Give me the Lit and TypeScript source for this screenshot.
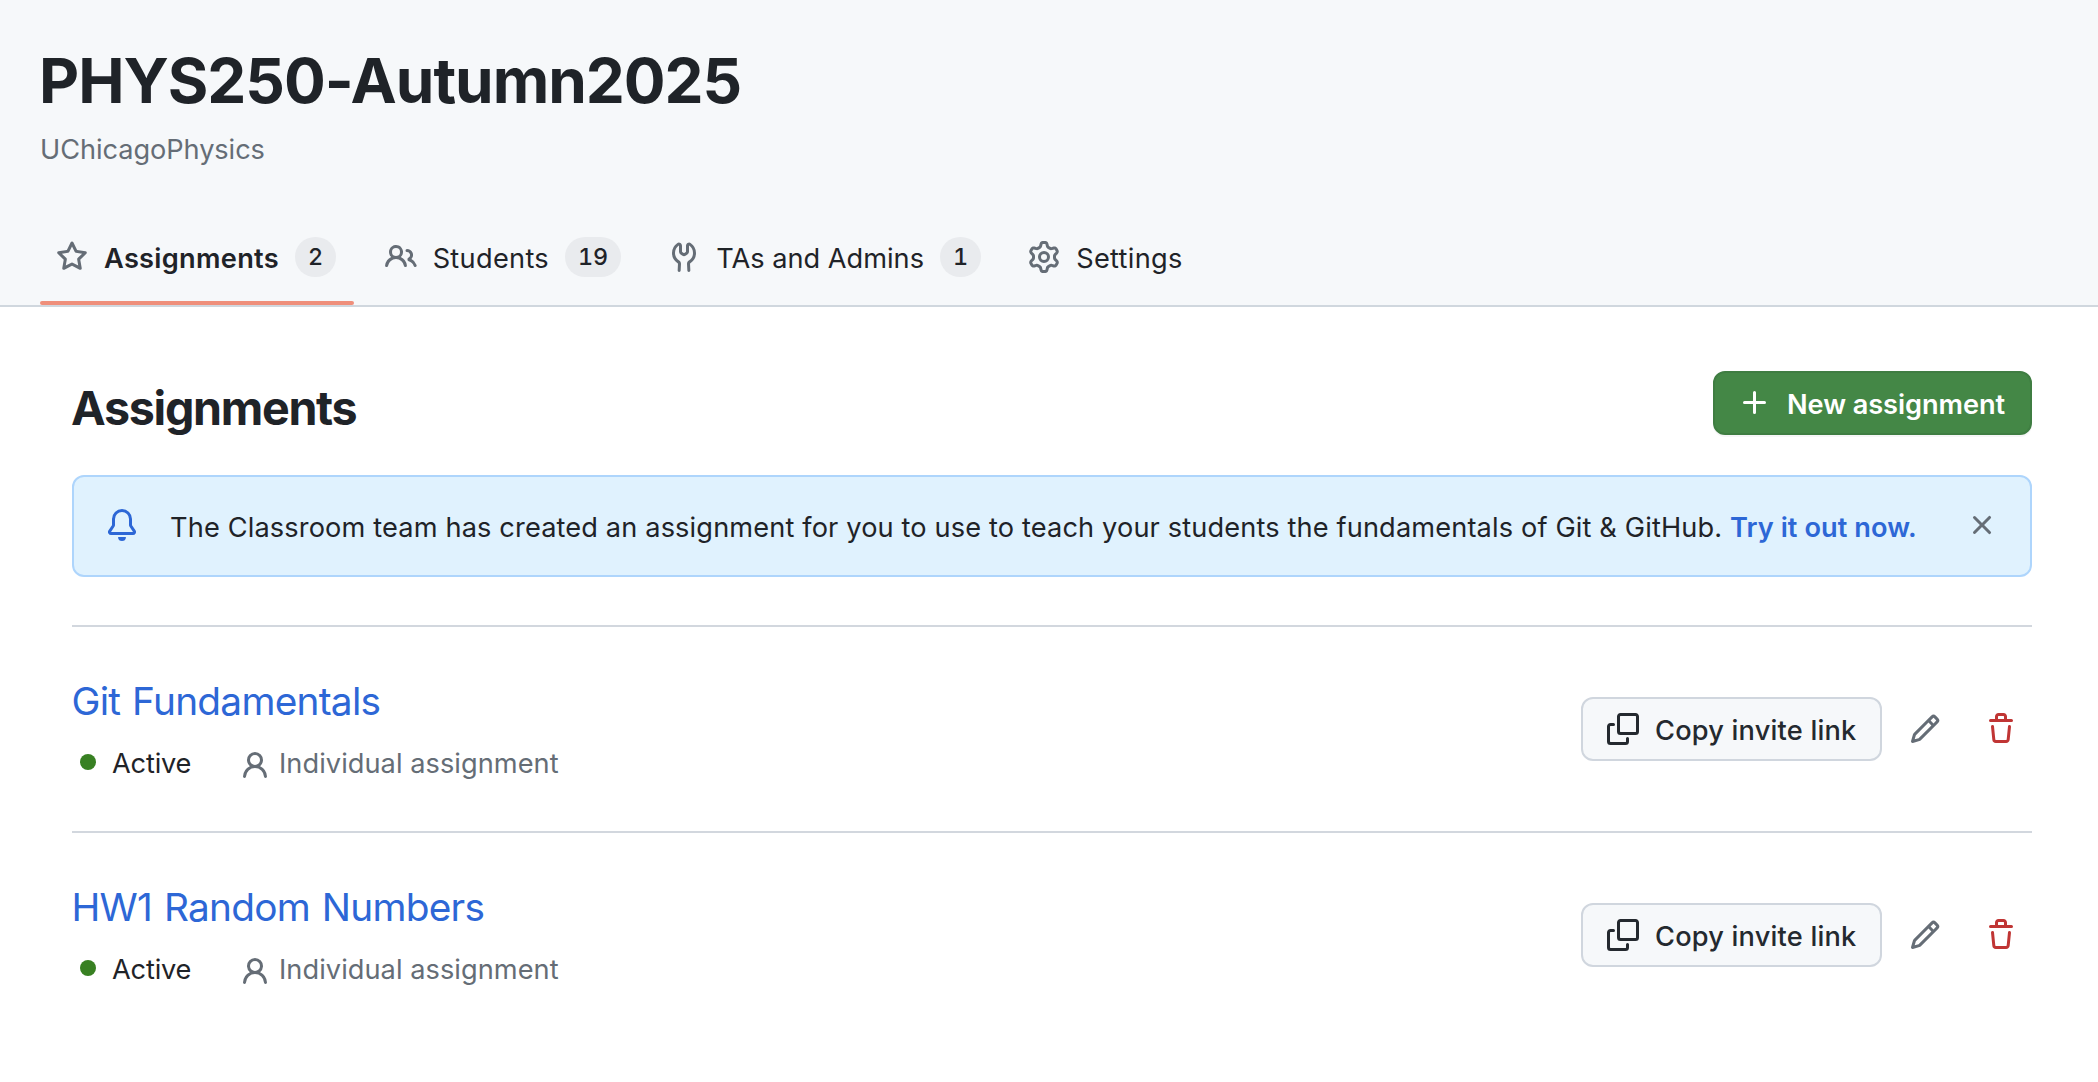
import { LitElement, html, css, svg, nothing } from "lit";
import { customElement, property } from "lit/decorators.js";
import { classMap } from "lit/directives/class-map.js";

const ICONS: Record<string, string> = {
  star: "M8 .25a.75.75 0 01.673.418l1.882 3.815 4.21.612a.75.75 0 01.416 1.279l-3.046 2.97.719 4.192a.75.75 0 01-1.088.791L8 12.347l-3.766 1.98a.75.75 0 01-1.088-.79l.72-4.194L.818 6.374a.75.75 0 01.416-1.28l4.21-.611L7.327.668A.75.75 0 018 .25zm0 2.445L6.615 5.5a.75.75 0 01-.564.41l-3.097.45 2.24 2.184a.75.75 0 01.216.664l-.528 3.084 2.769-1.456a.75.75 0 01.698 0l2.77 1.456-.53-3.084a.75.75 0 01.216-.664l2.24-2.183-3.096-.45a.75.75 0 01-.564-.41L8 2.694v.001z",
  people: "M5.5 3.5a2 2 0 100 4 2 2 0 000-4zM2 5.5a3.5 3.5 0 115.898 2.549 5.507 5.507 0 013.034 4.084.75.75 0 11-1.482.235 4.001 4.001 0 00-7.9 0 .75.75 0 01-1.482-.236A5.507 5.507 0 013.102 8.05 3.49 3.49 0 012 5.5zM11 4a.75.75 0 100 1.5 1.5 1.5 0 01.666 2.844.75.75 0 00-.416.672v.352a.75.75 0 00.574.73c1.2.289 2.162 1.2 2.522 2.372a.75.75 0 101.434-.44 5.01 5.01 0 00-2.56-3.012A3 3 0 0011 4z",
  wrench: "M5.433 2.304A4.494 4.494 0 003.5 6c0 1.598.832 3.002 2.09 3.802.518.328.929.923.902 1.64v.008l-.164 3.337a.75.75 0 11-1.498-.073l.163-3.33c.002-.085-.05-.216-.207-.316A5.996 5.996 0 012 6a5.994 5.994 0 012.567-4.92 1.482 1.482 0 011.673-.04c.462.296.76.827.76 1.423v2.82c0 .082.041.16.11.206l.75.51a.25.25 0 00.28 0l.75-.51A.25.25 0 009 5.282V2.463c0-.596.298-1.127.76-1.423a1.482 1.482 0 011.673.04A5.994 5.994 0 0114 6a5.996 5.996 0 01-2.786 5.068c-.157.1-.209.23-.207.315l.163 3.33a.75.75 0 11-1.498.074l-.164-3.345c-.027-.717.384-1.312.902-1.64A4.496 4.496 0 0012.5 6a4.494 4.494 0 00-1.933-3.696c-.024.017-.067.067-.067.159v2.818c0 .585-.29 1.132-.774 1.46l-.75.51a1.75 1.75 0 01-1.952 0l-.75-.51A1.75 1.75 0 015.5 5.282V2.463c0-.092-.043-.142-.067-.16z",
  gear: "M7.429 1.525a6.593 6.593 0 011.142 0c.036.003.108.036.137.146l.289 1.105c.147.56.55.967.997 1.189.174.086.341.183.501.29.417.278.97.423 1.53.27l1.102-.303c.11-.03.175.016.195.046.219.31.41.641.573.989.014.031.022.11-.059.19l-.815.806c-.411.406-.562.957-.53 1.456a4.588 4.588 0 010 .582c-.032.499.119 1.05.53 1.456l.815.806c.08.08.073.159.059.19a6.494 6.494 0 01-.573.99c-.02.029-.086.074-.195.045l-1.103-.303c-.559-.153-1.112-.008-1.529.27-.16.107-.327.204-.5.29-.449.222-.851.628-.998 1.189l-.289 1.105c-.029.11-.101.143-.137.146a6.613 6.613 0 01-1.142 0c-.036-.003-.108-.037-.137-.146l-.289-1.105c-.147-.56-.55-.967-.997-1.189a4.502 4.502 0 01-.501-.29c-.417-.278-.97-.423-1.53-.27l-1.102.303c-.11.03-.175-.016-.195-.046a6.492 6.492 0 01-.573-.989c-.014-.031-.022-.11.059-.19l.815-.806c.411-.406.562-.957.53-1.456a4.587 4.587 0 010-.582c.032-.499-.119-1.05-.53-1.456l-.815-.806c-.08-.08-.073-.159-.059-.19a6.44 6.44 0 01.573-.99c.02-.029.086-.075.195-.045l1.103.303c.559.153 1.112.008 1.529-.27.16-.107.327-.204.5-.29.449-.222.851-.628.998-1.189l.289-1.105c.029-.11.101-.143.137-.146zM8 0c-.236 0-.47.01-.701.03-.743.065-1.29.615-1.458 1.261l-.29 1.106c-.017.066-.078.158-.211.224a5.994 5.994 0 00-.668.386c-.123.082-.233.09-.3.071L3.27 2.776c-.644-.177-1.392.02-1.82.63a7.977 7.977 0 00-.704 1.217c-.315.675-.111 1.422.363 1.891l.815.806c.05.048.098.147.088.294a6.084 6.084 0 000 .772c.01.147-.038.246-.088.294l-.815.806c-.474.469-.678 1.216-.363 1.891.2.428.436.835.704 1.218.428.609 1.176.806 1.82.63l1.103-.303c.066-.019.176-.011.299.071.213.143.436.272.668.386.133.066.194.158.212.224l.289 1.106c.169.646.715 1.196 1.458 1.26a8.094 8.094 0 001.402 0c.743-.064 1.29-.614 1.458-1.26l.29-1.106c.017-.066.078-.158.211-.224a5.98 5.98 0 00.668-.386c.123-.082.233-.09.3-.071l1.102.302c.644.177 1.392-.02 1.82-.63.268-.382.505-.789.704-1.217.315-.675.111-1.422-.364-1.891l-.814-.806c-.05-.048-.098-.147-.088-.294a6.1 6.1 0 000-.772c-.01-.147.039-.246.088-.294l.814-.806c.475-.469.679-1.216.364-1.891a7.992 7.992 0 00-.704-1.218c-.428-.609-1.176-.806-1.82-.63l-1.103.303c-.066.019-.176.011-.299-.071a5.991 5.991 0 00-.668-.386c-.133-.066-.194-.158-.212-.224L10.16 1.29C9.99.645 9.444.095 8.701.031A8.094 8.094 0 008 0zm1.5 8a1.5 1.5 0 11-3 0 1.5 1.5 0 013 0zM11 8a3 3 0 11-6 0 3 3 0 016 0z",
  bell: "M8 16a2 2 0 001.985-1.75c.017-.137-.097-.25-.235-.25h-3.5c-.138 0-.252.113-.235.25A2 2 0 008 16z M8 1.5A3.5 3.5 0 004.5 5v2.947c0 .346-.102.683-.294.97l-1.703 2.556a.018.018 0 00-.003.01l.001.006c0 .002.002.004.004.006a.017.017 0 00.006.004l.007.001h10.964l.007-.001a.016.016 0 00.006-.004.016.016 0 00.004-.006l.001-.007a.017.017 0 00-.003-.01l-1.703-2.554a1.75 1.75 0 01-.294-.97V5A3.5 3.5 0 008 1.5zM3 5a5 5 0 0110 0v2.947c0 .05.015.098.042.139l1.703 2.555A1.518 1.518 0 0113.482 13H2.518a1.518 1.518 0 01-1.263-2.36l1.703-2.554A.25.25 0 003 7.947V5z",
  plus: "M7.75 2a.75.75 0 01.75.75V7h4.25a.75.75 0 110 1.5H8.5v4.25a.75.75 0 11-1.5 0V8.5H2.75a.75.75 0 010-1.5H7V2.75A.75.75 0 017.75 2z",
  x: "M3.72 3.72a.75.75 0 011.06 0L8 6.94l3.22-3.22a.75.75 0 111.06 1.06L9.06 8l3.22 3.22a.75.75 0 11-1.06 1.06L8 9.06l-3.22 3.22a.75.75 0 01-1.06-1.06L6.94 8 3.72 4.78a.75.75 0 010-1.06z",
  person: "M10.5 5a2.5 2.5 0 11-5 0 2.5 2.5 0 015 0zm.061 3.073a4 4 0 10-5.123 0 6.004 6.004 0 00-3.431 5.142.75.75 0 001.498.07 4.5 4.5 0 018.99 0 .75.75 0 101.498-.07 6.005 6.005 0 00-3.432-5.142z",
  copy: "M0 6.75C0 5.784.784 5 1.75 5h1.5a.75.75 0 010 1.5h-1.5a.25.25 0 00-.25.25v7.5c0 .138.112.25.25.25h7.5a.25.25 0 00.25-.25v-1.5a.75.75 0 011.5 0v1.5A1.75 1.75 0 019.25 16h-7.5A1.75 1.75 0 010 14.25v-7.5z M5 1.75C5 .784 5.784 0 6.75 0h7.5C15.216 0 16 .784 16 1.75v7.5A1.75 1.75 0 0114.25 11h-7.5A1.75 1.75 0 015 9.25v-7.5zm1.75-.25a.25.25 0 00-.25.25v7.5c0 .138.112.25.25.25h7.5a.25.25 0 00.25-.25v-7.5a.25.25 0 00-.25-.25h-7.5z",
  pencil: "M11.013 1.427a1.75 1.75 0 012.474 0l1.086 1.086a1.75 1.75 0 010 2.474l-8.61 8.61c-.21.21-.47.364-.756.445l-3.251.93a.75.75 0 01-.927-.928l.929-3.25a1.75 1.75 0 01.445-.758l8.61-8.61zm1.414 1.06a.25.25 0 00-.354 0L10.811 3.75l1.439 1.44 1.263-1.263a.25.25 0 000-.354l-1.086-1.086zM11.189 6.25L9.75 4.81l-6.286 6.287a.25.25 0 00-.064.108l-.558 1.953 1.953-.558a.249.249 0 00.108-.064l6.286-6.286z",
  trash: "M6.5 1.75a.25.25 0 01.25-.25h2.5a.25.25 0 01.25.25V3h-3V1.75zm4.5 0V3h2.25a.75.75 0 010 1.5H2.75a.75.75 0 010-1.5H5V1.75C5 .784 5.784 0 6.75 0h2.5C10.216 0 11 .784 11 1.75zM4.496 6.675a.75.75 0 10-1.492.15l.66 6.6A1.75 1.75 0 005.405 15h5.19c.9 0 1.652-.681 1.741-1.576l.66-6.6a.75.75 0 00-1.492-.149l-.66 6.6a.25.25 0 01-.249.225h-5.19a.25.25 0 01-.249-.225l-.66-6.6z",
};

@customElement("oct-icon")
class OctIcon extends LitElement {
  @property() name = "";
  static styles = css`
    :host { display: block; width: 32px; height: 32px; flex: none; }
    svg { display: block; width: 32px; height: 32px; fill: currentColor; }
  `;
  render() {
    return html`<svg viewBox="0 0 16 16" aria-hidden="true">${svg`<path fill-rule="evenodd" d=${ICONS[this.name] ?? ""}></path>`}</svg>`;
  }
}

@customElement("class-tabs")
class ClassTabs extends LitElement {
  static styles = css`
    :host { display: block; }
    nav { display: flex; gap: 15px; }
    a {
      display: flex; align-items: center; gap: 16px; height: 88px; padding: 0 16px;
      border-top: 4px solid transparent; position: relative;
      border-bottom: 4px solid transparent; color: #1f2328; text-decoration: none;
    }
    a.wide { letter-spacing: 0.3px; }
    a.current { padding-right: 17.5px; font-weight: 600; letter-spacing: 0.3px; }
    a.current::after {
      content: ""; position: absolute; left: 0; right: 0; bottom: -4px;
      height: 4px; border-radius: 2px; background: #ef8f7b;
    }
    oct-icon { color: #656d76; }
    .label { padding-top: 3px; white-space: nowrap; }
    .count {
      box-sizing: border-box; min-width: 41px; height: 40px; padding: 0 13px; border-radius: 21px;
      display: flex; align-items: center; justify-content: center; font-variant-numeric: tabular-nums;
      background: #e9ebee; font-size: 23.3px; font-weight: 500; letter-spacing: 0;
    }
  `;
  render() {
    const tabs = [
      { icon: "star", label: "Assignments", count: 2, current: true },
      { icon: "people", label: "Students", count: 19, wide: true },
      { icon: "wrench", label: "TAs and Admins", count: 1 },
      { icon: "gear", label: "Settings", wide: true },
    ];
    return html`<nav>${tabs.map(
      (t) => html`<a class=${classMap({ current: !!t.current, wide: !!t.wide })}>
        <oct-icon name=${t.icon}></oct-icon><span class="label">${t.label}</span>
        ${t.count ? html`<span class="count">${t.count}</span>` : nothing}
      </a>`
    )}</nav>`;
  }
}

@customElement("assignment-row")
class AssignmentRow extends LitElement {
  @property() name = "";
  static styles = css`
    :host { display: block; box-sizing: border-box; height: 206px; border-top: 2px solid #d2d7de; padding-top: 50px; }
    .row { display: flex; justify-content: space-between; align-items: flex-start; }
    .name { display: block; margin-left: -0.5px; font-size: 38.8px; line-height: 48px; letter-spacing: -0.74px; word-spacing: 1.6px; color: #2d67d6; }
    .meta { display: flex; align-items: center; height: 40px; margin-top: 18px; line-height: 40px; }
    .dot { width: 16px; height: 16px; margin: 0 16px 2px 8px; border-radius: 50%; background: #388022; }
    .state { width: 79px; padding-top: 2px; letter-spacing: -0.18px; }
    .kind { display: flex; align-items: center; gap: 8px; margin-left: 48px; color: #656d76; letter-spacing: 0.05px; }
    .kind span { padding-top: 2px; }
    .kind oct-icon { margin-top: 6px; }
    .actions { display: flex; align-items: center; margin-top: 20px; padding-right: 15px; }
    .copy {
      box-sizing: border-box; width: 301px; height: 64px; padding: 0 24px; display: flex; align-items: center; gap: 16px;
      border: 2px solid #d0d6de; border-radius: 12px; background: #f6f8fa; color: #24292f;
      font-weight: 500; letter-spacing: 0.2px; white-space: nowrap;
    }
    .copy span { padding-top: 3px; }
    .edit { margin-left: 27px; color: #656d76; }
    .remove { margin-left: 44px; color: #c03534; }
  `;
  render() {
    return html`<div class="row">
      <div>
        <a class="name">${this.name}</a>
        <div class="meta">
          <i class="dot"></i><span class="state">Active</span>
          <span class="kind"><oct-icon name="person"></oct-icon><span>Individual assignment</span></span>
        </div>
      </div>
      <div class="actions">
        <div class="copy" role="button"><oct-icon name="copy"></oct-icon><span>Copy invite link</span></div>
        <oct-icon class="edit" name="pencil"></oct-icon>
        <oct-icon class="remove" name="trash"></oct-icon>
      </div>
    </div>`;
  }
}

@customElement("app-root")
class AppRoot extends LitElement {
  static styles = css`
    :host {
      display: block; min-height: 1082px; background: #fff; color: #1f2328;
      font-family: Inter, "Liberation Sans", sans-serif; font-size: 27.2px; line-height: 40px;
    }
    header { box-sizing: border-box; height: 307px; padding: 41px 40px 0; background: #f6f8fa; border-bottom: 2px solid #d0d7de; }
    h1 { margin: 0 0 8px -1px; font-size: 62px; line-height: 80px; font-weight: 650; letter-spacing: -1.03px; }
    .org { height: 42px; line-height: 42px; margin-bottom: 38px; color: #656d76; letter-spacing: -0.07px; }
    main { padding: 64px 66px 0 72px; }
    .heading { display: flex; justify-content: space-between; align-items: flex-start; }
    h2 { margin: 5px 0 0 -1px; font-size: 46.6px; line-height: 64px; font-weight: 650; letter-spacing: -1.3px; }
    .new {
      box-sizing: border-box; width: 319px; height: 64px; padding: 0 24px; display: flex; align-items: center; gap: 16px;
      background: #448746; border: 2px solid #3f7d42; border-radius: 12px; color: #fff;
      box-shadow: 0 2px 0 rgba(31, 35, 40, 0.04); font-weight: 600; letter-spacing: -0.07px; white-space: nowrap;
    }
    .new span { padding-top: 3px; }
    .notice {
      box-sizing: border-box; height: 102px; margin: 35px 0 48px; padding: 0 32px; display: flex; align-items: center; gap: 32px;
      background: #e0f2fe; border: 2px solid #aed5fc; border-radius: 12px;
    }
    .bell { margin-top: -2px; color: #2d67d6; }
    .close { margin-top: -2px; color: #656d76; }
    .text { flex: 1; padding-top: 3px; letter-spacing: 0.135px; white-space: nowrap; }
    .text a { color: #2d67d6; font-weight: 600; letter-spacing: 0.05px; }
  `;
  render() {
    return html`
      <header>
        <h1>PHYS250-Autumn2025</h1>
        <div class="org">UChicagoPhysics</div>
        <class-tabs></class-tabs>
      </header>
      <main>
        <div class="heading">
          <h2>Assignments</h2>
          <div class="new" role="button"><oct-icon name="plus"></oct-icon><span>New assignment</span></div>
        </div>
        <div class="notice">
          <oct-icon class="bell" name="bell"></oct-icon>
          <div class="text">The Classroom team has created an assignment for you to use to teach your students the fundamentals of Git &amp; GitHub. <a>Try it out now.</a></div>
          <oct-icon class="close" name="x"></oct-icon>
        </div>
        ${["Git Fundamentals", "HW1 Random Numbers"].map((n) => html`<assignment-row name=${n}></assignment-row>`)}
      </main>
    `;
  }
}
